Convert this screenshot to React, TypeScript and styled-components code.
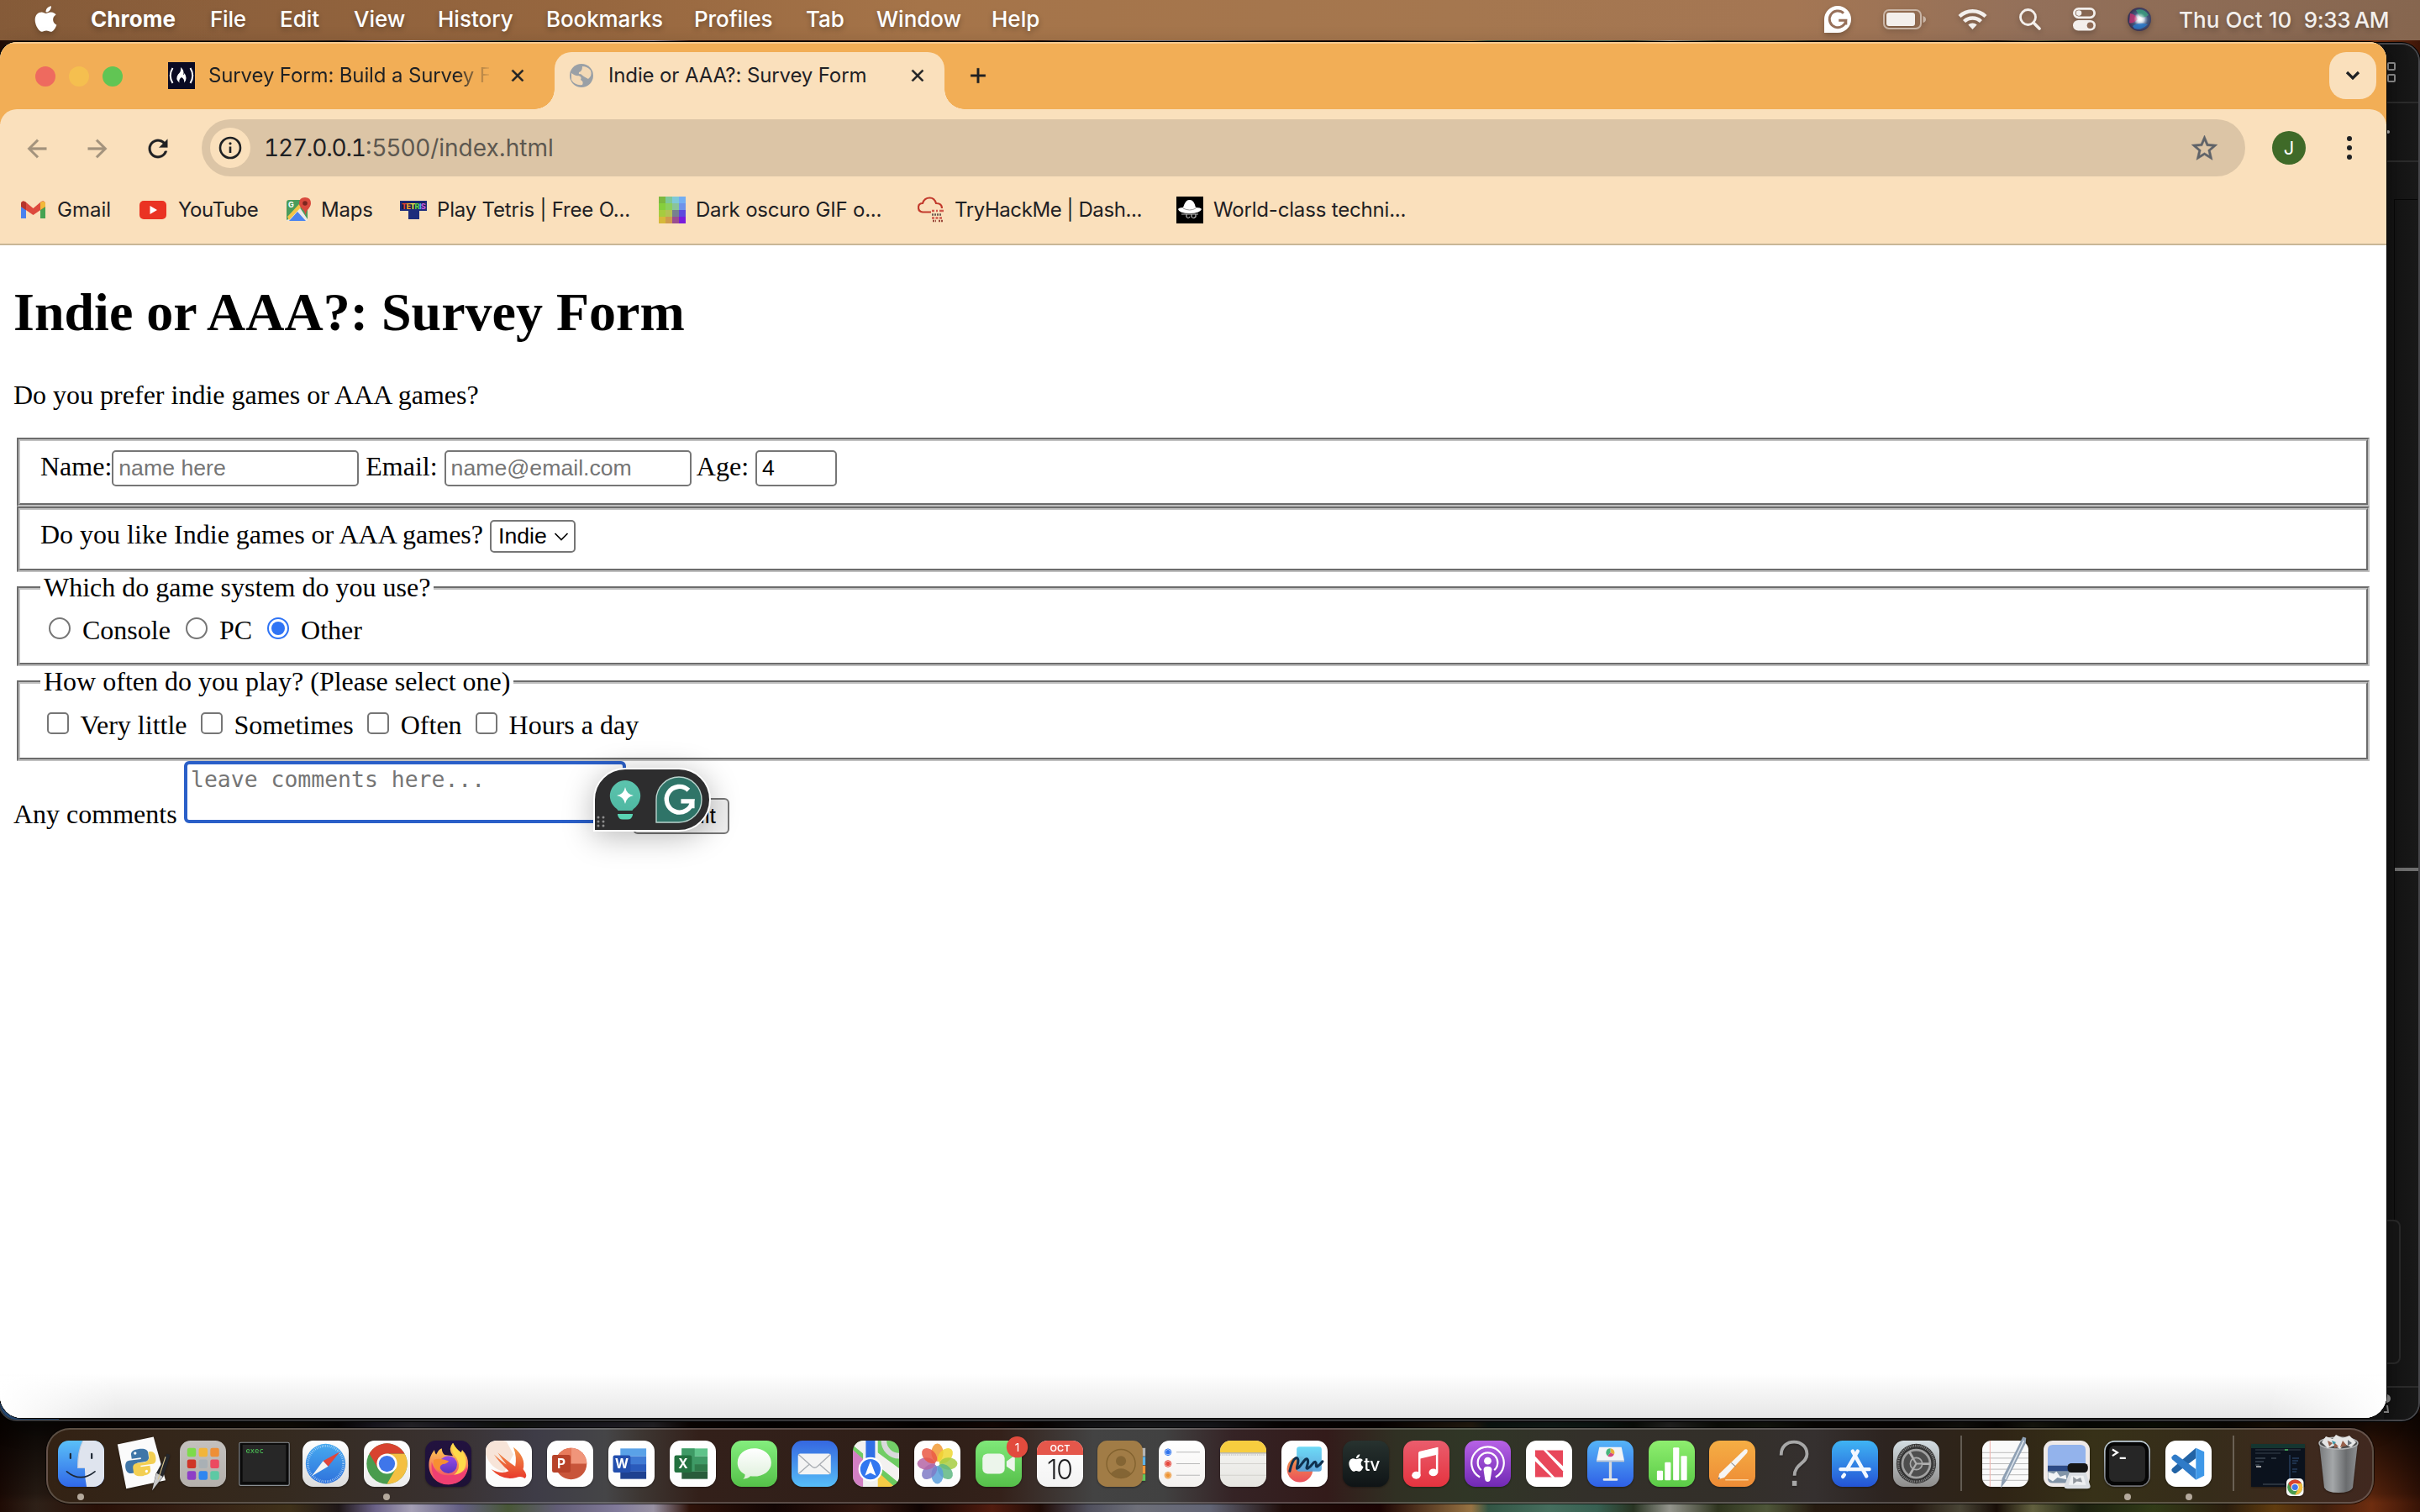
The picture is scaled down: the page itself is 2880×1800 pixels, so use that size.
import React from 'react';
import styled, { createGlobalStyle, css } from 'styled-components';
import { FaApple } from 'react-icons/fa';
import { MdArrowBack, MdArrowForward, MdRefresh, MdStarBorder, MdClose, MdAdd } from 'react-icons/md';

const ink = '#1f2124';
const sand = '#fae0bc';

const GlobalStyle = createGlobalStyle`
  html, body { margin: 0; padding: 0; background: #1a0f0a; }
  * { box-sizing: border-box; }
`;

const Desktop = styled.div`
  position: relative;
  width: 2880px;
  height: 1800px;
  overflow: hidden;
  font-family: Inter, 'Noto Sans', sans-serif;
  background: #0d0604;
`;

const Wallpaper = styled.div`
  position: absolute;
  inset: 0;
  background:
    linear-gradient(180deg, rgba(0,0,0,0) 93%, rgba(0,0,0,0.82) 93.5%, rgba(0,0,0,0.75) 94.6%, rgba(0,0,0,0.3) 98.8%, rgba(0,0,0,0.1) 99.4%),
    linear-gradient(90deg, #220c05 0%, #33241a 1.5%, #2e1208 4%, #3c2417 8%, #46361c 12%, #231a1b 14%, #766c96 15.5%, #b7b1c9 17%, #6f6a93 19%, #50613c 21%, #6c6782 23%, #8f88ab 25.5%, #a9a1b4 27%, #35150b 28.5%, #150604 32%, #3a1a10 36%, #120503 38%, #5b1f10 41%, #240d07 43%, #595968 45%, #7a7c87 47%, #6c6f81 50%, #24100c 53%, #1e0403 57%, #a8804a 60.8%, #385f4c 61.5%, #4d7a68 64%, #3d6a5a 66%, #2d3a26 67.5%, #a4a59c 69%, #343b22 71%, #57603f 73%, #2a1e12 75%, #271a10 79%, #514c3b 81%, #1b1008 82.5%, #6d6b45 84%, #1f2411 86%, #37421a 89%, #30210f 92%, #6c4310 94%, #48230e 96%, #7a3211 98%, #3d1507 100%);
`;

const MenuBar = styled.header`
  position: relative;
  display: flex;
  align-items: center;
  height: 48px;
  padding: 0 37px 2px 40px;
  color: #fff;
  background: linear-gradient(90deg, #80573440 0%, #0000 10%), linear-gradient(90deg, #875c3a 0%, #97673f 25%, #a57449 38%, #a5774f 60%, #a47653 74%, #93705a 84%, #86664f 100%);
  text-shadow: 0 3px 6px rgba(0, 0, 0, 0.3);
  svg { filter: drop-shadow(0 3px 3px rgba(0, 0, 0, 0.22)); flex: none; }
`;

const MenuItem = styled.span<{ $w: number; $bold?: boolean; $ls?: number }>`
  width: ${p => p.$w}px;
  margin-right: 42px;
  font-size: 26px;
  line-height: 32px;
  font-weight: ${p => (p.$bold ? 700 : 500)};
  letter-spacing: ${p => p.$ls ?? -0.2}px;
  white-space: nowrap;
`;

const AppleMark = styled(FaApple)`
  width: 29px;
  height: 35px;
  margin: -2px 39px 0 0;
`;

const Status = styled.div`
  display: flex;
  align-items: center;
  margin-left: auto;
  gap: 38px;
  color: #f3efec;
`;

const Clock = styled.span`
  display: flex;
  justify-content: space-between;
  width: 250px;
  margin-left: -5px;
  font-size: 26px;
  font-weight: 500;
  white-space: pre;
`;
const ClockPart = styled.span<{ $ls: number }>`
  letter-spacing: ${p => p.$ls}px;
  word-spacing: ${p => (p.$ls < 0 ? -2 : 0)}px;
`;

const Editor = styled.div`
  position: absolute;
  left: -2px;
  top: 51px;
  width: 2882px;
  height: 1641px;
  border-radius: 22px;
  border: 2px solid #46464a;
  background: #191919;
  box-shadow: 0 0 0 1px #000;
  overflow: hidden;
`;

const EditorRail = styled.div`
  position: absolute;
  right: 0;
  top: 0;
  width: 41px;
  height: 100%;
  display: flex;
  flex-direction: column;
  background: linear-gradient(90deg, #121212, #191919);
`;

const RailCell = styled.div<{ $h: number }>`
  height: ${p => p.$h}px;
  flex: none;
  border-bottom: 2px solid #2b2b2b;
  svg { display: block; }
`;

const RailBody = styled.div`
  height: 1310px;
  width: 28px;
  margin: 44px 0 0 12px;
  border-left: 1px solid #070707;
  border-top: 1px solid #070707;
  padding-top: 795px;
`;
const RailMark = styled.div`
  height: 4px;
  width: 28px;
  background: #6e6e6e;
`;
const RailCard = styled.div`
  position: absolute;
  right: 21px;
  top: 1399px;
  width: 40px;
  height: 172px;
  border: 2px solid #2a2a2a;
  border-radius: 8px;
  background: #161616;
`;
const RailFooter = styled.div`
  margin-top: auto;
  height: 40px;
  border-top: 2px solid #2b2b2b;
  svg { display: block; }
`;

const EditorStatus = styled.div`
  position: absolute;
  left: 0;
  bottom: 0;
  width: 70px;
  height: 30px;
  background: #2c5688;
`;

const Browser = styled.section`
  position: absolute;
  left: 0;
  top: 50px;
  width: 2840px;
  height: 1638px;
  display: flex;
  flex-direction: column;
  border-radius: 20px 20px 26px 26px;
  background: #fff;
  box-shadow: 0 0 0 1px #000, 0 10px 26px rgba(0, 0, 0, 0.35);
  overflow: hidden;
`;

const TabStrip = styled.div`
  display: flex;
  height: 98px;
  flex: none;
  padding: 12px 12px 0 42px;
  margin-bottom: -18px;
  background: #f2ae56;
  box-shadow: inset 0 2px 0 #f7c98d;
`;

const Lights = styled.div`
  display: flex;
  gap: 16px;
  padding-top: 17px;
  width: 158px;
`;
const Light = styled.i<{ $c: string }>`
  width: 24px;
  height: 24px;
  border-radius: 50%;
  background: ${p => p.$c};
`;

const Tab = styled.div<{ $active?: boolean }>`
  position: relative;
  display: flex;
  align-items: center;
  height: 68px;
  padding-bottom: 12px;
  color: ${ink};
  ${p =>
    p.$active
      ? css`
          width: 464px;
          padding-left: 16px;
          border-radius: 20px 20px 0 0;
          background: ${sand};
          &::before, &::after {
            content: '';
            position: absolute;
            bottom: 0;
            width: 24px;
            height: 24px;
          }
          &::before { left: -24px; background: radial-gradient(circle at 0 0, transparent 23.5px, ${sand} 24px); }
          &::after { right: -24px; background: radial-gradient(circle at 100% 0, transparent 23.5px, ${sand} 24px); }
        `
      : css`
          width: 460px;
        `}
`;

const TabTitle = styled.span<{ $w: number; $fade?: boolean }>`
  width: ${p => p.$w}px;
  margin-left: 16px;
  font-size: 24px;
  line-height: 34px;
  letter-spacing: -0.13px;
  white-space: nowrap;
  overflow: hidden;
  ${p => p.$fade && css`mask-image: linear-gradient(90deg, #000 88%, transparent 101%);`}
`;

/* Material icons carry an unfilled bounding path first; only the glyph path is thickened. */
const thicken = (w: number) => css`
  path:last-child { stroke: currentColor; stroke-width: ${w}px; }
`;

const CloseIcon = styled(MdClose)<{ $ml: number }>`
  width: 24px;
  height: 24px;
  margin-left: ${p => p.$ml}px;
  ${thicken(0.6)}
`;
const PlusIcon = styled(MdAdd)`
  width: 30px;
  height: 30px;
  margin: 13px 0 0 25px;
  color: ${ink};
  ${thicken(0.3)}
`;

const TabSearch = styled.button`
  display: grid;
  place-items: center;
  width: 56px;
  height: 56px;
  margin-left: auto;
  padding: 0;
  border: 0;
  border-radius: 20px;
  background: ${sand};
`;

const Toolbar = styled.div`
  position: relative;
  display: flex;
  align-items: center;
  flex: none;
  height: 92px;
  padding: 0 34px 0 28px;
  border-radius: 20px 20px 0 0;
  background: ${sand};
`;

const NavIcon = styled.span<{ $dim?: boolean; $mr: number }>`
  display: grid;
  place-items: center;
  width: 32px;
  height: 32px;
  margin-right: ${p => p.$mr}px;
  color: ${p => (p.$dim ? '#a3937d' : ink)};
  svg { width: 34px; height: 34px; margin-left: -1px; ${thicken(0.2)} }
`;

const Omnibox = styled.div`
  display: flex;
  align-items: center;
  width: 2432px;
  height: 68px;
  padding: 0 30px 0 10px;
  border-radius: 34px;
  background: #dcc5a6;
`;

const SiteInfo = styled.span`
  display: grid;
  place-items: center;
  width: 48px;
  height: 48px;
  margin-right: 16px;
  border-radius: 50%;
  background: ${sand};
`;

const Url = styled.span`
  flex: 1;
  font-size: 28px;
  line-height: 34px;
  color: ${ink};
  font-variant-numeric: tabular-nums;
  letter-spacing: -1.2px;
  em { font-style: normal; color: #5d5850; font-variant-numeric: normal; letter-spacing: 0; }
`;

const Star = styled(MdStarBorder)`
  width: 37px;
  height: 37px;
  color: #5f6368;
  ${thicken(0.3)}
`;

const Avatar = styled.span`
  display: grid;
  place-items: center;
  width: 40px;
  height: 40px;
  margin-left: 32px;
  border-radius: 50%;
  background: #3f6a28;
  color: #fff;
  font-size: 22px;
`;

const Kebab = styled.span`
  display: flex;
  flex-direction: column;
  gap: 5px;
  margin-left: 49px;
  i { width: 6px; height: 6px; border-radius: 50%; background: ${ink}; }
`;

const Bookmarks = styled.nav`
  display: flex;
  align-items: center;
  flex: none;
  height: 70px;
  padding: 0 0 12px 22px;
  background: ${sand};
  border-bottom: 2px solid #c8b696;
`;

const Bookmark = styled.a<{ $w: number; $ls?: number }>`
  display: flex;
  align-items: center;
  gap: 12px;
  width: ${p => p.$w}px;
  color: ${ink};
  font-size: 24px;
  line-height: 32px;
  letter-spacing: ${p => p.$ls ?? 0}px;
  white-space: nowrap;
  svg { flex: none; }
`;

const Page = styled.main`
  flex: 1;
  padding: 0 16px;
  color: #000;
  font-family: 'Liberation Serif', 'Times New Roman', serif;
  font-size: 32px;
  line-height: 37px;
  background:
    linear-gradient(90deg, #fff 0, rgba(255,255,255,0) 140px, rgba(255,255,255,0) 2700px, #fff 100%) bottom / 100% 50px no-repeat,
    linear-gradient(180deg, #fff 0, #fcfcfc 10%, #e6e6e6 100%) bottom / 100% 52px no-repeat,
    #fff;
`;

const Title = styled.h1`
  margin: 43px 0;
  font-size: 64px;
  line-height: 74px;
`;

const Intro = styled.p`
  margin: 0 0 32px;
`;

const Group = styled.fieldset<{ $h: number }>`
  height: ${p => p.$h}px;
  margin: 0 4px;
  padding: 11px 24px 20px;
  border: 4px groove rgb(192, 192, 192);
  legend { padding: 0 4px; height: 37px; }
`;

const fieldText = css`
  border: 2px solid #767676;
  background: #fff;
  color: #000;
  font-family: 'Liberation Sans', Arial, sans-serif;
  font-size: 26.67px;
  outline: 0;
  &::placeholder { color: #757575; }
`;

const TextField = styled.input<{ $w: number }>`
  ${fieldText}
  width: ${p => p.$w}px;
  height: 43px;
  padding: 2px 6px;
  border-radius: 5px;
`;

const SelectBox = styled.span`
  ${fieldText}
  display: inline-flex;
  align-items: center;
  width: 102px;
  height: 39px;
  padding-left: 8px;
  border-radius: 5px;
  select {
    appearance: none;
    width: 66px;
    padding: 0;
    border: 0;
    background: none;
    font: inherit;
    color: inherit;
  }
`;

const Radio = styled.input`
  appearance: none;
  width: 26px;
  height: 26px;
  margin: 6px 6px 0 10px;
  border: 2px solid #767676;
  border-radius: 50%;
  background: #fff;
  &:checked {
    padding: 3px;
    border: 2.5px solid #2f74f5;
    background: #2f74f5 content-box;
  }
`;

const Check = styled.input`
  appearance: none;
  width: 26px;
  height: 26px;
  margin: 6px 6px 0 8px;
  border: 2px solid #767676;
  border-radius: 5px;
  background: #fff;
`;

const Choices = styled.div<{ $mt: number }>`
  margin-top: ${p => p.$mt}px;
`;

const CommentRow = styled.div`
  position: relative;
  display: flex;
  align-items: flex-start;
`;
const CommentLabel = styled.label`
  width: 203px;
  padding-top: 45px;
`;
const Comment = styled.textarea`
  display: block;
  width: 526px;
  height: 74px;
  padding: 2px 4px;
  border: 4px solid #2a5fc8;
  border-radius: 6px;
  background: #fff;
  font-family: 'DejaVu Sans Mono', monospace;
  font-size: 26.45px;
  line-height: 31px;
  resize: none;
  outline: 0;
  overflow: hidden;
  &::placeholder { color: #757575; }
`;
const Submit = styled.button`
  width: 115px;
  height: 43px;
  margin: 44px 0 0 8px;
  padding: 0 12px;
  border: 2px solid #767676;
  border-radius: 6px;
  background: #efefef;
  color: #000;
  font-family: 'Liberation Sans', Arial, sans-serif;
  font-size: 26.67px;
`;

const Assistant = styled.div`
  position: absolute;
  left: 690px;
  top: 8px;
  display: flex;
  align-items: center;
  width: 140px;
  height: 76px;
  padding-left: 16px;
  border: 2px solid #fff;
  border-radius: 38px 38px 38px 0;
  background: #2d2d2e;
  box-shadow: 0 6px 36px rgba(0, 0, 0, 0.28);
`;

const Dock = styled.footer`
  position: absolute;
  left: 55px;
  top: 1700px;
  display: flex;
  align-items: center;
  width: 2770px;
  height: 90px;
  padding: 0 2px 6px 3px;
  border: 2px solid rgba(255, 255, 255, 0.2);
  border-radius: 28px;
  box-shadow: 0 0 0 1px rgba(0, 0, 0, 0.6);
  background: linear-gradient(90deg, #332214 0%, #352a1f 10%, #393130 17%, #3e3c47 21%, #454547 24%, #3d3632 25.5%, #33201a 28%, #2f1f18 38%, #34211a 41%, #434343 45%, #414141 48%, #352325 51%, #331b1a 55%, #303023 58%, #303626 61%, #33302a 66%, #332f29 72%, #35302f 76%, #2d2420 79%, #2f2415 84%, #373118 88%, #362c1a 93%, #3e2a1e 97%, #40281f 100%);
`;

const Slot = styled.div<{ $running?: boolean }>`
  position: relative;
  display: grid;
  place-items: center;
  flex: none;
  width: 72.8px;
  height: 80px;
  & > svg { display: block; overflow: visible; filter: drop-shadow(0 1px 1px rgba(0, 0, 0, 0.35)); }
  ${p =>
    p.$running &&
    css`
      &::after {
        content: '';
        position: absolute;
        left: calc(50% - 4px);
        bottom: -4px;
        width: 8px;
        height: 8px;
        border-radius: 50%;
        background: #b4a99c;
      }
    `}
`;

const Divider = styled.div`
  width: 2px;
  height: 66px;
  margin: 0 15.1px 0 16.1px;
  flex: none;
  background: rgba(255, 255, 255, 0.25);
`;

type Kids = { children?: React.ReactNode };
const Icon = ({ children }: Kids) => (
  <svg width="55" height="55" viewBox="0 0 100 100">{children}</svg>
);
const Grad = ({ id, a, b }: { id: string; a: string; b: string }) => (
  <linearGradient id={id} x1="0" y1="0" x2="0" y2="1">
    <stop offset="0" stopColor={a} />
    <stop offset="1" stopColor={b} />
  </linearGradient>
);
const Tile = ({ id, a, b, children }: Kids & { id: string; a: string; b: string }) => (
  <Icon>
    <defs>
      <Grad id={id} a={a} b={b} />
      <clipPath id={id + 'c'}><rect width="100" height="100" rx="23" /></clipPath>
    </defs>
    <rect width="100" height="100" rx="23" fill={`url(#${id})`} />
    <g clipPath={`url(#${id}c)`}>{children}</g>
  </Icon>
);

const ChromeDisc = () => (
  <g>
    <circle r="44" fill="#4a9c4e" />
    <path d="M0 -22 L38.1 -22 A44 44 0 0 1 0 44 L19 11 Z" fill="#f4c042" />
    <path d="M-38.1 -22 L-19 11 L-20 -10 L0 -22 L38.1 -22 A44 44 0 0 0 -38.1 -22Z" fill="#d8432f" />
    <circle r="22" fill="#fff" />
    <circle r="17.500" fill="#3f76ea" />
  </g>
);

const Office = ({ id, letter, c }: { id: string; letter: string; c: string[] }) => (
  <Tile id={id} a="#fff" b="#fdfdfd">
    <rect x="26" y="17" width="56" height="17" fill={c[0]} />
    <rect x="26" y="34" width="56" height="17" fill={c[1]} />
    <rect x="26" y="51" width="56" height="16" fill={c[2]} />
    <rect x="26" y="67" width="56" height="16" fill={c[3]} />
    {letter === 'X' && <rect x="26" y="17" width="28" height="50" fill="#3f9a66" />}
    <rect x="10" y="32" width="38" height="37" rx="4" fill={c[4]} />
    <text x="29" y="60" fontSize="28" fontWeight="700" textAnchor="middle" fill="#fff" fontFamily="Inter, sans-serif">{letter}</text>
  </Tile>
);

const Finder = () => (
  <Tile id="fi" a="#5ac0f8" b="#3068e8">
    <path d="M54 0H100V100H62Q58 82 58 60H43Q42 25 54 0Z" fill="#dfe4ee" />
    <path d="M27 29v9M73 29v9" stroke="#1d2733" strokeWidth="4" strokeLinecap="round" />
    <path d="M19 67Q49 92 80 67" stroke="#1d2733" strokeWidth="3" fill="none" strokeLinecap="round" />
    <path d="M54 0Q42 25 43 59H58" stroke="#c2cbdc" strokeWidth="2" fill="none" />
  </Tile>
);
const Python = () => (
  <Icon>
    <path d="M-4 8L74 -8L100 86L15 104Z" fill="#fbfbfb" />
    <g transform="translate(46 47) rotate(-8)">
      <path d="M-2-29c-15 0-16 7-16 11v8H2v3H-24c-8 0-10 8-10 15s4 13 11 13h6v-8c0-8 6-13 13-13H10c6 0 9-4 9-9v-9c0-7-6-11-21-11z" fill="#3f76a8" />
      <path d="M3 29c15 0 16-7 16-11v-8H-1V7H25c8 0 9-8 9-14s-3-13-10-13h-4v9c0 7-5 12-12 12H-9c-6 0-9 4-9 9v9c0 7 6 11 21 11z" fill="#f3cf52" />
      <circle cx="-9" cy="-21" r="3" fill="#fff" /><circle cx="10" cy="21" r="3" fill="#fff" />
    </g>
    <path d="M103 28L110 31L95 78L71 108L79 72Z" fill="#25272c" />
    <path d="M80 70L94 78L71 108Z" fill="#c9c9c9" />
    <path d="M100 35L84 84" stroke="#d9c58d" strokeWidth="2" />
  </Icon>
);
const Launchpad = () => (
  <Tile id="lp" a="#c4c1be" b="#b4b0ac">
    {['#7ddb4a', '#f2b53a', '#ee8f36', '#cf3528', '#a9b0b5', '#ec4a61', '#8d3fc6', '#2f86f0', '#5dc9a4'].map((c, i) => (
      <rect key={c} x={16 + (i % 3) * 25} y={16 + Math.floor(i / 3) * 25} width="19" height="19" rx="4" fill={c} />
    ))}
  </Tile>
);
const Exec = () => (
  <Icon>
    <rect x="-4" y="4" width="108" height="93" rx="3" fill="#0b0b0b" stroke="#8a8f94" strokeWidth="2" />
    <rect x="3" y="9" width="94" height="80" fill="#272727" />
    <text x="10" y="27" fontSize="16" fill="#4fd15a" fontFamily="'DejaVu Sans Mono', monospace">exec</text>
  </Icon>
);
const Safari = () => (
  <Tile id="sf" a="#ffffff" b="#dcdcdc">
    <defs><Grad id="sfg" a="#46aaf0" b="#2f72dc" /></defs>
    <circle cx="50" cy="50" r="43" fill="url(#sfg)" />
    <circle cx="50" cy="50" r="38.500" fill="none" stroke="#d7e9fb" strokeWidth="5" strokeDasharray="1 3" />
    <path d="M81 24L44.500 44L55.500 56Z" fill="#e0463c" />
    <path d="M20 77L44.500 44L55.500 56Z" fill="#f3f3f3" />
  </Tile>
);
const Chrome = () => (
  <Tile id="ch" a="#ffffff" b="#ececec">
    <g transform="translate(50 50)"><ChromeDisc /></g>
  </Tile>
);
const Firefox = () => (
  <Tile id="ff" a="#22123f" b="#1d1136">
    <defs><Grad id="ffg" a="#ffdd4a" b="#f0386b" /><Grad id="ffp" a="#9a4be8" b="#5a35c0" /></defs>
    <path d="M50 95C25 95 8 76 8 53C8 38 14 28 20 20Q21 28 24 30Q30 18 36 17Q36 26 42 31L60 33Q48 18 60 5Q66 18 78 26L80 20Q94 34 93 54C92 78 74 95 50 95Z" fill="url(#ffg)" />
    <path d="M50 75Q22 76 14 46Q10 92 50 95Q88 92 92 56Q82 76 50 75Z" fill="#ef3f72" />
    <circle cx="50" cy="52" r="19" fill="url(#ffp)" />
    <path d="M18 42Q30 36 51 44Q48 50 38 51Q28 56 33 66Q16 62 18 42Z" fill="#f78f32" />
    <path d="M60 5Q54 26 68 38Q80 60 62 74Q92 70 88 40Q86 30 80 22L78 26Q66 18 60 5Z" fill="#ffd94a" />
  </Tile>
);
const Swift = () => (
  <Tile id="sw" a="#ffffff" b="#fbfbfb">
    <defs><Grad id="swg" a="#f29a4a" b="#e8392b" /></defs>
    <path d="M0 10Q20 -6 45 2L60 30L40 68Q10 60 0 30Z" fill="#f7e4d8" />
    <path d="M60 14Q88 36 81 62Q92 76 85 82Q77 76 66 80Q36 88 12 62Q34 74 50 66Q30 48 18 30Q36 46 45 52Q34 38 26 26Q46 44 64 56Q68 36 60 14Z" fill="url(#swg)" />
  </Tile>
);
const PowerPoint = () => (
  <Tile id="pp" a="#fff" b="#fdfdfd">
    <circle cx="52" cy="50" r="34" fill="#c8553a" />
    <path d="M52 16A34 34 0 0 1 86 50H52Z" fill="#f0957a" />
    <path d="M52 16A34 34 0 0 0 18 50H52Z" fill="#e87b5c" />
    <rect x="11" y="31" width="40" height="38" rx="4" fill="#b8432a" />
    <text x="31" y="60" fontSize="28" fontWeight="700" textAnchor="middle" fill="#fff" fontFamily="Inter, sans-serif">P</text>
  </Tile>
);
const Messages = () => (
  <Tile id="ms" a="#84ee7e" b="#55c149">
    <defs><Grad id="msg" a="#ffffff" b="#dff0dc" /></defs>
    <path d="M50 17C30 17 14 30 14 48C14 59 20 68 30 73Q31 79 26 83Q36 83 42 77C67 80 87 67 87 48C87 30 70 17 50 17Z" fill="url(#msg)" />
  </Tile>
);
const Mail = () => (
  <Tile id="ml" a="#3567e0" b="#57bdf8">
    <rect x="14" y="28" width="71" height="45" rx="5" fill="#f4f4f4" />
    <path d="M15 30L44 56Q50 61 56 56L84 30M15 72L39 51M84 72L60 51" stroke="#a9adb3" strokeWidth="2.500" fill="none" />
  </Tile>
);
const Maps = () => (
  <Tile id="mp" a="#74cf68" b="#68c85e">
    <path d="M0 20L100 110H0Z" fill="#d27fc4" />
    <path d="M0 10L100 92V60L40 16V0H0Z" fill="#f3f1f0" />
    <path d="M52 66L90 100H52Z" fill="#f5cb45" />
    <path d="M22 0h32v100H22z" fill="#f1f1f1" />
    <path d="M28 0h20v50H28z" fill="#2f6fe6" />
    <circle cx="100" cy="0" r="33" fill="none" stroke="#d9d9dc" strokeWidth="12" />
    <circle cx="38" cy="62" r="24" fill="#3277f0" stroke="#fff" strokeWidth="4" />
    <path d="M38 44L50 76L38 70L26 76Z" fill="#fff" />
  </Tile>
);
const Photos = () => (
  <Tile id="ph" a="#fff" b="#fcfcfc">
    {['#f29a35', '#efd733', '#a6cc43', '#5fb782', '#5a9edb', '#7f7ac6', '#b565a6', '#ea5845'].map((c, i) => (
      <ellipse key={c} cx="50" cy="26" rx="13" ry="19.500" fill={c} opacity="0.85" transform={`rotate(${i * 45} 50 50)`} />
    ))}
  </Tile>
);
const FaceTime = () => (
  <Icon>
    <defs><Grad id="ft" a="#7fe879" b="#56c04a" /></defs>
    <rect width="100" height="100" rx="23" fill="url(#ft)" />
    <rect x="15" y="28" width="48" height="44" rx="11" fill="#ecf5eb" />
    <path d="M67 45L82 34Q85 33 85 36V64Q85 68 82 66L67 56Z" fill="#ecf5eb" />
    <circle cx="90" cy="14" r="23" fill="#e24b3d" />
    <text x="90" y="23" fontSize="25" textAnchor="middle" fill="#fff" fontFamily="Inter, sans-serif">1</text>
  </Icon>
);
const Calendar = () => (
  <Tile id="ca" a="#fff" b="#f3f3f3">
    <rect width="100" height="31" fill="#e5574b" />
    <text x="50" y="24" fontSize="20" fontWeight="600" textAnchor="middle" fill="#fff" fontFamily="Inter, sans-serif">OCT</text>
    <text x="49" y="84" fontSize="58" fontWeight="300" textAnchor="middle" letterSpacing="-2" fill="#1d1d1f" fontFamily="Inter, sans-serif">10</text>
  </Tile>
);
const Contacts = () => (
  <Icon>
    <path d="M92 16h12v18H92z" fill="#b5b5b5" /><path d="M92 35h12v18H92z" fill="#5fb3e8" />
    <path d="M92 54h12v18H92z" fill="#f0973a" /><path d="M92 73h12v14H92z" fill="#63c659" />
    <rect width="98" height="100" rx="21" fill="#a17c46" />
    <circle cx="51" cy="50" r="31" fill="none" stroke="#82622f" strokeWidth="2.500" />
    <circle cx="51" cy="44" r="11" fill="#846534" />
    <path d="M29 71Q51 50 73 71Q51 92 29 71Z" fill="#846534" />
  </Icon>
);
const Reminders = () => (
  <Tile id="re" a="#fff" b="#f3f1ef">
    {['#2f74ee', '#e6483e', '#ee9432'].map((c, i) => (
      <g key={c}>
        <circle cx="20" cy={25 + i * 25} r="7" fill="none" stroke={c} strokeWidth="1.800" />
        <circle cx="20" cy={25 + i * 25} r="5" fill={c} />
        <path d={`M38 ${25 + i * 25}H89`} stroke="#b9b9b9" strokeWidth="2" />
      </g>
    ))}
  </Tile>
);
const Notes = () => (
  <Tile id="no" a="#f7f7f5" b="#e6e5e1">
    <rect width="100" height="26" fill="#f7cd3f" />
    <path d="M0 27H100" stroke="#a9a8a4" strokeWidth="2" />
    <path d="M0 31H100" stroke="#aaa" strokeWidth="2" strokeDasharray="2 2" />
    <path d="M0 50H100M0 75H100" stroke="#cfcdc8" strokeWidth="1.500" />
  </Tile>
);
const Freeform = () => (
  <Tile id="fr" a="#fff" b="#fefefe">
    <defs><Grad id="frg" a="#f29a48" b="#ea4f5c" /><Grad id="frb" a="#62d8f6" b="#55a2dc" /></defs>
    <circle cx="40" cy="62" r="28" fill="url(#frg)" />
    <rect x="33" y="13" width="54" height="54" rx="6" fill="url(#frb)" opacity="0.93" />
    <path d="M18 66C26 30 38 34 36 46C34 60 30 64 38 58C48 46 54 34 57 42C60 50 50 62 57 60C66 56 68 46 73 46C78 48 72 58 78 56Q84 52 89 45" stroke="#10314f" strokeWidth="5.500" fill="none" strokeLinecap="round" />
  </Tile>
);
const AppleTv = () => (
  <Tile id="tv" a="#27322f" b="#0f1416">
    <g transform="translate(13 27) scale(0.083)">
      <path fill="#fff" d="M318.700 268.700c-.2-36.700 16.400-64.400 50-84.800-18.800-26.900-47.200-41.700-84.700-44.600-35.500-2.800-74.300 20.700-88.500 20.700-15 0-49.400-19.700-76.400-19.700C63.300 141.200 4 184.800 4 273.500q0 39.300 14.400 81.200c12.800 36.700 59 126.700 107.200 125.200 25.200-.6 43-17.900 75.800-17.900 31.800 0 48.300 17.900 76.400 17.900 48.600-.7 90.400-82.500 102.600-119.300-65.200-30.700-61.700-90-61.700-91.900zm-56.600-164.200c27.300-32.400 24.800-61.900 24-72.500-24.100 1.400-52 16.400-67.900 34.900-17.500 19.800-27.800 44.300-25.600 71.900 26.100 2 49.900-11.400 69.500-34.300z" />
    </g>
    <text x="46" y="66" fontSize="38" fontWeight="500" fill="#fff" fontFamily="Inter, sans-serif" letterSpacing="-1">tv</text>
  </Tile>
);
const Music = () => (
  <Tile id="mu" a="#ea5d6d" b="#e5333f">
    <path d="M35 26L73 17V70M35 26V75" stroke="#fff" strokeWidth="4.500" fill="none" />
    <path d="M33 25L75 15V30L33 40Z" fill="#fff" />
    <ellipse cx="28" cy="75" rx="9.500" ry="8" fill="#fff" /><ellipse cx="65" cy="69" rx="9.500" ry="8" fill="#fff" />
  </Tile>
);
const Podcasts = () => (
  <Tile id="po" a="#b762e6" b="#7129b4">
    <g fill="none" stroke="#fff" strokeWidth="4">
      <path d="M33 79A35 35 0 1 1 67 79" /><path d="M36 64A21.500 21.500 0 1 1 64 64" />
    </g>
    <circle cx="50" cy="44" r="8" fill="#fff" />
    <path d="M41 63Q41 56 50 56Q59 56 59 63L56 83Q55 89 50 89Q45 89 44 83Z" fill="#fff" />
  </Tile>
);
const News = () => (
  <Tile id="ne" a="#fff" b="#fff">
    <rect x="20" y="21" width="60" height="58" fill="#e8475a" />
    <path d="M20 21L80 79" stroke="#fff" strokeWidth="34" />
    <path d="M20 21H38L80 66V79H62L20 34Z" fill="#e8475a" />
  </Tile>
);
const Keynote = () => (
  <Tile id="ke" a="#55b4f8" b="#2f60e6">
    <path d="M26 14H74L80 43H20Z" fill="#f2f4f6" /><path d="M20 43H80V46H20Z" fill="#c5cad0" />
    <path d="M50 26V17A9 9 0 0 1 58 30Z" fill="#e8b13c" /><path d="M50 26L58 30A9 9 0 0 1 44 33Z" fill="#d4477f" />
    <path d="M50 26L44 33A9 9 0 0 1 50 17Z" fill="#47b37c" />
    <path d="M47 46H53V84H47Z" fill="#d6dade" /><rect x="34" y="82" width="32" height="5" rx="2" fill="#e8eaec" />
  </Tile>
);
const Numbers = () => (
  <Tile id="nu" a="#8eee6f" b="#5bcb47">
    <rect x="18" y="65" width="13" height="21" rx="2" fill="#fff" /><rect x="35" y="47" width="13" height="39" rx="2" fill="#fff" />
    <rect x="53" y="15" width="13" height="71" rx="2" fill="#fff" /><rect x="70" y="33" width="13" height="53" rx="2" fill="#fff" />
  </Tile>
);
const Pages = () => (
  <Tile id="pa" a="#f5ae44" b="#ee8c36">
    <path d="M77 19Q86 17 82 27L33 80L19 84L22 72Z" fill="#f6f5f3" />
    <path d="M48 48L57 56" stroke="#8c8c8c" strokeWidth="2" /><path d="M19 84L21 79L24 82Z" fill="#555" />
    <path d="M35 85H85" stroke="#fbd19b" strokeWidth="3" />
  </Tile>
);
const Question = () => (
  <Icon>
    <path d="M23 32C23 12 36 3 51 3C66 3 79 13 79 29C79 50 52 50 52 76" fill="none" stroke="#a7a7a7" strokeWidth="7" />
    <rect x="47" y="87" width="10" height="11" fill="#a7a7a7" />
  </Icon>
);
const AppStore = () => (
  <Tile id="as" a="#3fb4f3" b="#2454d6">
    <g stroke="#f3f8ff" strokeWidth="8" strokeLinecap="round" fill="none">
      <path d="M45 23L75 77" /><path d="M56 23L33 62" /><path d="M19 62H81" /><path d="M27 74L24 78" />
    </g>
  </Tile>
);
const Settings = () => (
  <Tile id="se" a="#d3dde2" b="#8e8d8c">
    <circle cx="50" cy="50" r="43" fill="#333" />
    <circle cx="50" cy="50" r="39" fill="none" stroke="#858585" strokeWidth="5" strokeDasharray="2 2" />
    <circle cx="50" cy="50" r="30" fill="#4e4e4e" stroke="#a0a0a0" strokeWidth="5" />
    <path d="M50 50H80M50 50L35 24M50 50L35 76" stroke="#b0b0b0" strokeWidth="5" />
    <circle cx="50" cy="50" r="13" fill="#5b5b5b" stroke="#a8a8a8" strokeWidth="3" />
    <path d="M50 50H63M50 50L43.500 39M50 50L43.500 61" stroke="#b0b0b0" strokeWidth="4" />
  </Tile>
);
const TextEdit = () => (
  <Icon>
    <rect width="100" height="100" rx="20" fill="#fafafa" />
    <path d="M0 26H100M0 38H100M0 50H100M0 62H100M0 74H100M2 86H98" stroke="#b9b9b9" strokeWidth="1.800" />
    <path d="M17 0V100" stroke="#f0b7b0" strokeWidth="2" />
    <path d="M88 -8L95 -6L94 6L53 86L40 103L43 82Z" fill="#8fa0b3" />
    <path d="M90 0L50 84" stroke="#dbe3ec" strokeWidth="3" />
  </Icon>
);
const Preview = () => (
  <Icon>
    <rect width="100" height="100" rx="20" fill="#eee9e8" />
    <path d="M9 20Q9 9 20 9H80Q91 9 91 20V54H9Z" fill="#93b3ec" />
    <rect x="9" y="54" width="82" height="14" fill="#2c4a86" /><path d="M9 66H91V82Q91 92 80 92H20Q9 92 9 82Z" fill="#8194a7" />
    <path d="M10 68L22 72L28 67L36 78L48 74L50 84L30 80L20 88L10 82Z" fill="#f2f4f6" />
    <rect x="52" y="49" width="44" height="20" rx="8" fill="#161616" />
    <path d="M56 69H92L101 98Q102 104 94 104H52Q44 104 45 98Z" fill="#d9dde2" />
    <path d="M60 76H86L92 96H54Z" fill="#eef0f2" /><path d="M64 78l8 6 8-4 4 10-12-2-8 6z" fill="#90969d" />
  </Icon>
);
const Terminal = () => (
  <Tile id="te" a="#c4d2db" b="#6d6d72">
    <rect x="3" y="3" width="94" height="94" rx="19" fill="#060606" />
    <rect x="11" y="11" width="78" height="78" rx="11" fill="#262626" />
    <path d="M18 19L29 26L18 33" stroke="#fff" strokeWidth="4" fill="none" /><path d="M34 38H47" stroke="#fff" strokeWidth="4" />
  </Tile>
);
const VsCode = () => (
  <Tile id="vs" a="#fff" b="#fff">
    <path d="M66 16V38L24 70Q21 72 18 70L14 66Q12 63 15 60Z" fill="#2263a5" />
    <path d="M66 85V62L24 31Q21 29 18 31L14 35Q12 38 15 41Z" fill="#2f7bc8" />
    <path d="M66 16L84 24V76L66 85Z" fill="#3e98e8" />
  </Tile>
);
const Minimized = () => (
  <svg width="64" height="68" viewBox="0 0 64 68">
    <rect x="0" y="11" width="64" height="51" fill="#0b121d" /><rect x="0" y="11" width="64" height="5" fill="#153530" />
    <path d="M5 18h54M5 22h30" stroke="#39434f" strokeWidth="1.200" /><path d="M40 18h4" stroke="#3f9a55" strokeWidth="2" />
    <path d="M5 28h12M24 28h6M5 32h10M5 36h5" stroke="#535f6c" /><path d="M6 38h6" stroke="#ccc" strokeWidth="1.500" />
    <path d="M46 24v34M49 28h8M49 31h7M49 34h5M49 41h6M49 44h5" stroke="#33507a" /><path d="M14 59h26" stroke="#4a545f" />
    <rect x="42" y="52" width="20.500" height="21" rx="5" fill="#f6f6f6" />
    <g transform="translate(52.200 62.500) scale(0.205)"><ChromeDisc /></g>
  </svg>
);
const Trash = () => (
  <svg width="50" height="66" viewBox="0 0 50 66">
    <defs>
      <linearGradient id="tr"><stop offset="0" stopColor="#77797b" /><stop offset="0.35" stopColor="#a4a7a9" /><stop offset="0.7" stopColor="#6a6c6e" /><stop offset="1" stopColor="#8e9092" /></linearGradient>
    </defs>
    <path d="M2 8L48 8L42 62Q39 68 25 68Q11 68 8 62Z" fill="url(#tr)" />
    <ellipse cx="25" cy="9" rx="23" ry="7" fill="#4c4c4c" stroke="#b3b5b7" strokeWidth="1.500" />
    <path d="M5 8L10 1L18 4L22 -1L30 3L38 0L46 8L40 14L32 10L27 16L20 12L12 15Z" fill="#e6e6e6" />
    <path d="M12 6l6 3-4 4zM30 6l5 6-8 2zM20 8l5 5-5 2z" fill="#96604b" /><path d="M17 6l5 2-3 3z" fill="#3b98a8" /><path d="M36 5l5 4-5 3z" fill="#6b737a" />
  </svg>
);

const Word = () => <Office id="wo" letter="W" c={['#5aa2e8', '#3f7ad4', '#2a5bbc', '#1e4190', '#234fae']} />;
const Excel = () => <Office id="ex" letter="X" c={['#5fc38a', '#3f9a66', '#2f7a4a', '#295c3b', '#23713f']} />;

const apps: [React.FC, boolean?][] = [
  [Finder, true], [Python], [Launchpad], [Exec], [Safari], [Chrome, true], [Firefox], [Swift], [PowerPoint],
  [Word], [Excel], [Messages], [Mail], [Maps], [Photos], [FaceTime], [Calendar], [Contacts], [Reminders], [Notes], [Freeform],
  [AppleTv], [Music], [Podcasts], [News], [Keynote], [Numbers], [Pages], [Question], [AppStore], [Settings],
];
const recent: [React.FC, boolean?][] = [[TextEdit], [Preview], [Terminal, true], [VsCode, true]];

const GLetter = ({ color, w }: { color: string; w: number }) => (
  <path d="M8.500 -8.800A12 12 0 1 0 12 1.500H1.500M12 1.500V8" fill="none" stroke={color} strokeWidth={w} />
);

const menus: [string, number, number][] = [
  ['File', 41, -0.2], ['Edit', 46, 0], ['View', 58, 0], ['History', 87, 0], ['Bookmarks', 134, -0.1],
  ['Profiles', 91, -0.1], ['Tab', 42, 0], ['Window', 95, 0], ['Help', 56, 0],
];

const SystemMenu = () => (
  <MenuBar>
    <AppleMark />
    <MenuItem $w={100} $bold $ls={0.1}>Chrome</MenuItem>
    {menus.map(([t, w, ls]) => <MenuItem key={t} $w={w} $ls={ls}>{t}</MenuItem>)}
    <Status>
      <svg width="32" height="32" viewBox="0 0 32 32">
        <path d="M0 32V16A16 16 0 1 1 16 32Z" fill="#fff" />
        <g transform="translate(16 16) scale(0.82)"><GLetter color="#97705a" w={3.6} /></g>
      </svg>
      <svg width="51" height="24" viewBox="0 0 51 24">
        <rect x="1" y="1" width="44" height="22" rx="6" fill="none" stroke="#c9b5a6" strokeWidth="2" />
        <rect x="4" y="4" width="34" height="16" rx="3" fill="#f3efec" /><path d="M47.500 8Q51 9 51 12Q51 15 47.500 16Z" fill="#c9b5a6" />
      </svg>
      <svg width="35" height="26" viewBox="0 0 35 26">
        <g fill="none" stroke="#f3efec" strokeWidth="4.400">
          <path d="M2 9.500A22.500 22.500 0 0 1 33 9.500" /><path d="M7.500 15.500A14.500 14.500 0 0 1 27.500 15.500" />
        </g>
        <path d="M17.500 25L12.300 19.600A7.500 7.500 0 0 1 22.700 19.600Z" fill="#f3efec" />
      </svg>
      <svg width="26" height="26" viewBox="0 0 26 26">
        <circle cx="10.500" cy="10.500" r="9" fill="none" stroke="#f3efec" strokeWidth="2.800" /><path d="M17 17L24 24" stroke="#f3efec" strokeWidth="3.600" strokeLinecap="round" />
      </svg>
      <svg width="27" height="28" viewBox="0 0 27 28">
        <rect x="1.400" y="1.400" width="24.200" height="10.400" rx="5.200" fill="none" stroke="#f3efec" strokeWidth="2.800" /><circle cx="7" cy="6.600" r="3.300" fill="#f3efec" />
        <rect x="0" y="15" width="27" height="12.500" rx="6.200" fill="#f3efec" /><circle cx="20.500" cy="21.200" r="3.800" fill="#8d6a55" />
      </svg>
      <svg width="28" height="28" viewBox="0 0 28 28">
        <defs>
          <radialGradient id="siri" cx="0.55" cy="0.5"><stop offset="0" stopColor="#fff" /><stop offset="0.3" stopColor="#b7c3d6" /><stop offset="0.62" stopColor="#455a80" /><stop offset="1" stopColor="#3a3455" /></radialGradient>
          <radialGradient id="glow"><stop offset="0" stopColor="#fff" /><stop offset="1" stopColor="#fff" stopOpacity="0" /></radialGradient>
        </defs>
        <circle cx="14" cy="14" r="14" fill="url(#siri)" />
        <path d="M3 7Q10 8 12 14Q6 20 2 18Z" fill="#c5336f" opacity="0.8" /><path d="M10 3Q20 0 25 9Q18 14 14 10Z" fill="#3b9a7c" opacity="0.85" />
        <path d="M6 22Q14 16 24 20Q16 28 8 25Z" fill="#2a78c8" opacity="0.85" />
        <circle cx="14.500" cy="13.500" r="7" fill="url(#glow)" />
      </svg>
      <Clock><ClockPart $ls={0.1}>Thu Oct 10</ClockPart><ClockPart $ls={-0.4}>9:33 AM</ClockPart></Clock>
    </Status>
  </MenuBar>
);

const CodeEditor = () => (
  <Editor>
    <EditorRail>
      <RailCell $h={70}>
        <svg width="20" height="50" viewBox="0 0 20 50" fill="none" stroke="#8d8d8d" strokeWidth="2"><rect x="5" y="22" width="8" height="8" rx="1" /><rect x="5" y="36" width="8" height="8" rx="1" /></svg>
      </RailCell>
      <RailCell $h={70}>
        <svg width="20" height="50" viewBox="0 0 20 50"><circle cx="5" cy="34" r="2" fill="#b0b0b0" /></svg>
      </RailCell>
      <RailBody><RailMark /></RailBody>
      <RailFooter>
        <svg width="20" height="34" viewBox="0 0 20 34"><circle cx="3" cy="13" r="5" fill="#8d8d8d" /><path d="M4 21L5 29H-2" stroke="#8d8d8d" strokeWidth="2" fill="none" /></svg>
      </RailFooter>
    </EditorRail>
    <RailCard />
    <EditorStatus />
  </Editor>
);

const swatches = ['#7cb83f', '#7fc79a', '#7fc9d8', '#74aef2', '#85cf3c', '#8ccf5e', '#8ac49a', '#6f93ea', '#a6cc3f', '#b2c255', '#77808f', '#5f49dd', '#d6b93a', '#cf9a4e', '#9a4f90', '#7a1cdc'];

const BrowserTop = () => (
  <>
    <TabStrip>
      <Lights><Light $c="#ee6a5f" /><Light $c="#f5bf4f" /><Light $c="#61c554" /></Lights>
      <Tab>
        <svg width="32" height="32" viewBox="0 0 32 32">
          <rect width="32" height="32" fill="#0a0a23" />
          <path d="M5.500 7Q0 16 5.500 25M26.500 7Q32 16 26.500 25" stroke="#fff" strokeWidth="2" fill="none" />
          <path d="M15 6Q20 10 18 15Q19.500 15 19.500 13Q24 20 19 24.500Q20 20 16 18Q12.500 20 13.500 24.500Q8 20 12 14.500Q16 11 15 6Z" fill="#fff" />
        </svg>
        <TabTitle $w={334} $fade>Survey Form: Build a Survey F</TabTitle>
        <CloseIcon $ml={22} />
      </Tab>
      <Tab $active>
        <svg width="32" height="32" viewBox="0 0 32 32">
          <circle cx="16" cy="16" r="14" fill="#9aa0a6" />
          <path d="M4 13Q10 17 12 16Q17 17 15 21Q19 23 17 27Q8 28 4 21ZM17 5Q17 11 13 12Q12 15 15 14Q18 17 24 20Q29 16 27 10Q23 5 17 5Z" fill="#f3d9b6" />
        </svg>
        <TabTitle $w={336}>Indie or AAA?: Survey Form</TabTitle>
        <CloseIcon $ml={20} />
      </Tab>
      <PlusIcon />
      <TabSearch aria-label="Search tabs">
        <svg width="18" height="12" viewBox="0 0 18 12"><path d="M2 2L9 9L16 2" stroke={ink} strokeWidth="3.200" fill="none" /></svg>
      </TabSearch>
    </TabStrip>
    <Toolbar>
      <NavIcon $dim $mr={40}><MdArrowBack /></NavIcon>
      <NavIcon $dim $mr={40}><MdArrowForward /></NavIcon>
      <NavIcon $mr={36}><MdRefresh /></NavIcon>
      <Omnibox>
        <SiteInfo>
          <svg width="28" height="28" viewBox="0 0 28 28"><circle cx="14" cy="14" r="12" fill="none" stroke={ink} strokeWidth="2.600" /><path d="M14 12.500V20" stroke={ink} strokeWidth="2.600" /><circle cx="14" cy="8.800" r="1.600" fill={ink} /></svg>
        </SiteInfo>
        <Url>127.0.0.1<em>:5500/index.html</em></Url>
        <Star />
      </Omnibox>
      <Avatar>J</Avatar>
      <Kebab><i /><i /><i /></Kebab>
    </Toolbar>
    <Bookmarks>
      <Bookmark $w={142}>
        <svg width="34" height="32" viewBox="0 0 34 32">
          <path d="M3 8V26H9V13Z" fill="#4a82ee" /><path d="M26 13V26H32V8Z" fill="#46a352" />
          <path d="M3 12V8Q4 4 8 6L17.500 14L27 6Q31 4 32 8V12L17.500 22Z" fill="#dd4a3d" /><path d="M26 7Q31 4 32 8V12L26 16Z" fill="#f2b93a" /><path d="M3 12V8Q4 4 9 7V16Z" fill="#b5352a" />
        </svg>Gmail
      </Bookmark>
      <Bookmark $w={174} $ls={-0.45}>
        <svg width="36" height="32" viewBox="0 0 36 32"><rect x="2" y="5" width="32" height="22" rx="5" fill="#ea3323" /><path d="M14.500 11V21L23 16Z" fill="#fff" /></svg>YouTube
      </Bookmark>
      <Bookmark $w={138} $ls={-0.2}>
        <svg width="32" height="32" viewBox="0 0 32 32">
          <rect x="3" y="4" width="25" height="25" rx="3" fill="#4a9c5c" /><path d="M3 29L18 12L28 27V29Z" fill="#eceae6" /><path d="M6 29L16 18L26 29Z" fill="#4b84ee" /><path d="M4 24L18 9L20 13L6 28Z" fill="#f3c549" />
          <text x="5" y="13" fontSize="9" fontWeight="700" fill="#fff" fontFamily="Inter, sans-serif">G</text>
          <path d="M25 1Q32 1 32 8Q32 12 27 17L25.500 22L24 17Q18 12 18 8Q18 1 25 1Z" fill="#d9493d" /><circle cx="25" cy="8" r="2.800" fill="#7c261f" />
        </svg>Maps
      </Bookmark>
      <Bookmark $w={308} $ls={-0.18}>
        <svg width="32" height="32" viewBox="0 0 32 32">
          <path d="M0 5H32V17H23V27H10V17H0Z" fill="#1d2c7c" /><rect x="2" y="7" width="28" height="8" fill="#141c50" />
          <text x="16" y="14.500" fontSize="9" fontWeight="800" textAnchor="middle" fontFamily="Inter, sans-serif" letterSpacing="-0.7">
            <tspan fill="#e8412f">T</tspan><tspan fill="#f0a030">E</tspan><tspan fill="#eee34a">T</tspan><tspan fill="#59cf4c">R</tspan><tspan fill="#4ab4ee">I</tspan><tspan fill="#c45ae0">S</tspan>
          </text>
        </svg>Play Tetris | Free O...
      </Bookmark>
      <Bookmark $w={308} $ls={-0.2}>
        <svg width="32" height="32" viewBox="0 0 32 32" shapeRendering="crispEdges">
          {swatches.map((c, i) => <rect key={i} x={(i % 4) * 8} y={Math.floor(i / 4) * 8} width="8" height="8" fill={c} />)}
        </svg>Dark oscuro GIF o...
      </Bookmark>
      <Bookmark $w={308} $ls={-0.42}>
        <svg width="32" height="32" viewBox="0 0 32 32">
          <path d="M16 18.500H6Q1 18 1 13Q1 8 6 8Q8 1.500 14.500 1.500Q20 1.500 22 8Q29 8 29 14" fill="none" stroke="#c23a2c" strokeWidth="2.200" />
          <g fill="none" strokeWidth="2.600"><path d="M17 17h3M22 17h2M26 17h5" stroke="#d0584c" /><path d="M17 21.500h11" stroke="#6c5a50" strokeDasharray="2 1" /><path d="M17 25.500h13" stroke="#d0584c" strokeDasharray="3 1.500" /><path d="M18 29h4M25 29h6" stroke="#9a4a3c" strokeDasharray="2 1" /></g>
        </svg>TryHackMe | Dash...
      </Bookmark>
      <Bookmark $w={320} $ls={-0.18}>
        <svg width="32" height="32" viewBox="0 0 32 32">
          <rect width="32" height="32" fill="#000" /><path d="M8 13Q11 3 16 4Q21 4 23 13Q29 13 30 15Q28 20 16 20Q3 20 2 15Q3 13 8 13Z" fill="#fff" /><path d="M8 14Q16 18 23 14" stroke="#999" fill="none" />
          <path d="M6 21H26M12 21v3q2 3 4 0M18 21v3q2 3 5 0v-3" stroke="#bbb" strokeWidth="1.200" fill="none" />
        </svg>World-class techni...
      </Bookmark>
    </Bookmarks>
  </>
);

const SurveyPage = () => (
  <Page>
    <Title>Indie or AAA?: Survey Form</Title>
    <Intro>Do you prefer indie games or AAA games?</Intro>
    <Group $h={82}>
      Name:<TextField $w={294} placeholder="name here" /> Email: <TextField $w={294} placeholder="name@email.com" /> Age: <TextField $w={97} defaultValue="4" />
    </Group>
    <Group $h={78}>
      Do you like Indie games or AAA games?{' '}
      <SelectBox>
        <select defaultValue="Indie"><option>Indie</option><option>AAA</option></select>
        <svg width="18" height="10" viewBox="0 0 18 10"><path d="M1.500 1L9 8.500L16.500 1" stroke="#000" strokeWidth="1.700" fill="none" /></svg>
      </SelectBox>
    </Group>
    <Group $h={112}>
      <legend>Which do game system do you use?</legend>
      <Choices $mt={0}>
        <Radio type="radio" name="system" /> Console <Radio type="radio" name="system" /> PC <Radio type="radio" name="system" defaultChecked /> Other
      </Choices>
    </Group>
    <Group $h={113}>
      <legend>How often do you play? (Please select one)</legend>
      <Choices $mt={1}>
        <Check type="checkbox" /> Very little <Check type="checkbox" /> Sometimes <Check type="checkbox" /> Often <Check type="checkbox" /> Hours a day
      </Choices>
    </Group>
    <CommentRow>
      <CommentLabel>Any comments</CommentLabel>
      <Comment placeholder="leave comments here..." />
      <Submit>Submit</Submit>
      <Assistant>
        <svg width="124" height="72" viewBox="0 0 124 72" overflow="visible">
          <defs><Grad id="bulb" a="#5cc4ae" b="#4fb8a2" /></defs>
          <path d="M20 13A18.500 18.500 0 0 1 30.500 46.500Q28.500 48 28.500 49H11.500Q11.500 48 9.500 46.500A18.500 18.500 0 0 1 20 13Z" fill="url(#bulb)" />
          <path d="M11 53H29V54Q28 59.500 23 59.500H17Q12 59.500 11 54Z" fill="#5ad3b3" />
          <path d="M20 21Q21.500 29.500 30 31Q21.500 32.500 20 41Q18.500 32.500 10 31Q18.500 29.500 20 21Z" fill="#fff" />
          <path d="M57 63V36A27 27 0 1 1 84 63Z" fill="#2f7468" stroke="#b9d4ce" strokeWidth="1.400" />
          <g transform="translate(84.500 36) scale(1.28)"><GLetter color="#fff" w={4.2} /></g>
          <g fill="#8f8f8f" transform="translate(-14 57)">{[0, 5, 10].map(y => [2, 8].map(x => <circle key={x + '-' + y} cx={x} cy={y} r="1.500" />))}</g>
        </svg>
      </Assistant>
    </CommentRow>
  </Page>
);

export default function App() {
  return (
    <Desktop>
      <GlobalStyle />
      <Wallpaper />
      <SystemMenu />
      <CodeEditor />
      <Browser>
        <BrowserTop />
        <SurveyPage />
      </Browser>
      <Dock>
        {apps.map(([A, on], i) => <Slot key={i} $running={on}><A /></Slot>)}
        <Divider />
        {recent.map(([A, on], i) => <Slot key={i} $running={on}><A /></Slot>)}
        <Divider />
        <Slot><Minimized /></Slot>
        <Slot><Trash /></Slot>
      </Dock>
    </Desktop>
  );
}
